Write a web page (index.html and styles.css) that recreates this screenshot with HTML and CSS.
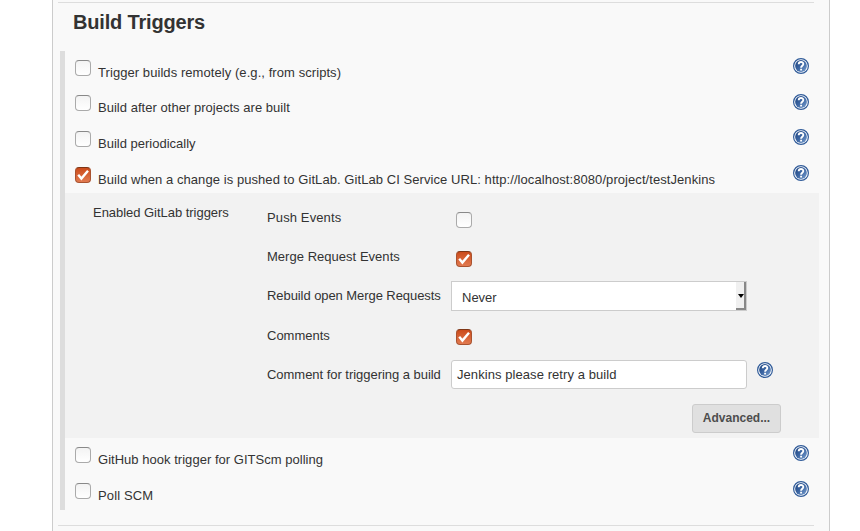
FILE: index.html
```html
<!DOCTYPE html>
<html lang="en">
<head>
<meta charset="utf-8">
<title>Build Triggers</title>
<link rel="stylesheet" href="styles.css">
</head>
<body>
<svg class="defs" width="0" height="0" aria-hidden="true">
  <defs>
    <linearGradient id="blue" x1="0" y1="0" x2="1" y2="1">
      <stop offset="0" stop-color="#1d437f"/><stop offset=".5" stop-color="#3c66a3"/><stop offset="1" stop-color="#7ba0cf"/>
    </linearGradient>
    <symbol id="help" viewBox="0 0 16 16">
      <circle cx="8" cy="8" r="7.4" fill="#fff" stroke="#305b99" stroke-width="1.2"/>
      <circle cx="8" cy="8" r="5.9" fill="url(#blue)"/>
      <path d="M5.7 6.2C5.8 3.3 10.3 3.3 10.3 6C10.3 7.8 8.1 7.7 8.1 9.8M8.1 10.8V12.6" fill="none" stroke="#fff" stroke-width="1.9"/>
    </symbol>
    <symbol id="tick" viewBox="0 0 16 16">
      <path d="M3.2 7.8L6.4 11.6L13 3.8" fill="none" stroke="#fff" stroke-width="2.4"/>
    </symbol>
  </defs>
</svg>
<main class="panel">
  <h1 class="title"><span>Build Triggers</span></h1>
  <section class="triggers">
    <div class="row short"><span class="box"></span><label class="wide">Trigger builds remotely (e.g., from scripts)</label><svg class="help"><use href="#help"/></svg></div>
    <div class="row low"><span class="box"></span><label class="loose">Build after other projects are built</label><svg class="help"><use href="#help"/></svg></div>
    <div class="row"><span class="box"></span><label>Build periodically</label><svg class="help"><use href="#help"/></svg></div>
    <div class="row short"><span class="box on"><svg><use href="#tick"/></svg></span><label class="wide">Build when a change is pushed to GitLab. GitLab CI Service URL: http://localhost:8080/project/testJenkins</label><svg class="help"><use href="#help"/></svg></div>
    <div class="details">
      <div class="group"><span class="tight">Enabled GitLab triggers</span></div>
      <div class="fields">
        <div class="name"><span class="widest">Push Events</span></div><div class="value"><span class="box"></span></div>
        <div class="name"><span class="loose">Merge Request Events</span></div><div class="value"><span class="box on"><svg><use href="#tick"/></svg></span></div>
        <div class="name"><span class="tighter">Rebuild open Merge Requests</span></div><div class="value"><div class="select"><span>Never</span><span class="arrow"></span></div></div>
        <div class="name down"><span>Comments</span></div><div class="value"><span class="box on"><svg><use href="#tick"/></svg></span></div>
        <div class="name"><span class="tight">Comment for triggering a build</span></div><div class="value"><div class="input"><span class="wide">Jenkins please retry a build</span></div><svg class="help"><use href="#help"/></svg></div>
      </div>
      <div class="button">Advanced...</div>
    </div>
    <div class="row"><span class="box"></span><label class="loose">GitHub hook trigger for GITScm polling</label><svg class="help"><use href="#help"/></svg></div>
    <div class="row"><span class="box"></span><label class="widest">Poll SCM</label><svg class="help"><use href="#help"/></svg></div>
  </section>
</main>
</body>
</html>
```
FILE: styles.css
```css
* { box-sizing: border-box; }
body { margin: 0; background: #fff; color: #333; font: 13px/16px "Liberation Sans", Arial, sans-serif; overflow: hidden; }
.defs { display: block; }
.panel { width: 778px; height: 531px; margin-left: 52px; padding: 2px 15px 0 5px; background: #f9f9f9; border: solid #ccc; border-width: 0 1px; }
.title { height: 49px; margin: 0; padding: 7px 0 0 15px; border-top: 1px solid #ddd; font-size: 20px; line-height: 24px; letter-spacing: -.18px; }
.triggers { width: 759px; margin-left: 2px; border-left: 5px solid #ddd; white-space: nowrap; }
.panel::after { content: ""; display: block; margin-top: 15px; border-top: 1px solid #ddd; }
.wide { letter-spacing: .068px; }
.widest { letter-spacing: .12px; }
.loose { letter-spacing: .028px; }
.tight { letter-spacing: -.035px; }
.tighter { letter-spacing: -.07px; }
.row { display: flex; height: 36px; padding: 0 10px; }
.row.short { height: 35px; }
.row .box { margin-top: 9px; }
.row label { margin: 14px 0 0 7px; }
.row .help { margin: 7px 0 0 auto; }
.row.low .help { margin-top: 8px; }
.help { flex: none; width: 16px; height: 16px; display: block; }
.box { flex: none; display: block; width: 16px; height: 16px; border: 1px solid #aaa; border-top-color: #888; border-radius: 4px; background: linear-gradient(#f3f3f3, #fff); }
.box.on { border-color: #a9522f; border-top-color: #7e3515; background: linear-gradient(#cb4b1b, #e27a50); }
.box svg { display: block; width: 16px; height: 16px; margin: -1px; }
.details { display: grid; grid-template-columns: 174px 1fr; grid-template-rows: 211px 34px; height: 245px; padding-left: 28px; background: #f2f2f2; }
.group { padding-top: 12px; }
.fields { display: grid; grid-template-columns: 184px 1fr; grid-template-rows: 39px 39px 39px 40px 39px; padding-top: 8px; }
.name { padding-top: 9px; }
.name.down { padding-top: 10px; }
.value { display: flex; }
.value > .box { margin: 11px 0 0 5px; }
.select { display: flex; justify-content: space-between; width: 296px; height: 30px; margin-top: 2px; border: 1px solid #ccc; background: #fff; }
.select > span:first-child { padding: 8px 0 0 10px; }
.arrow { width: 10px; height: 28px; background: #f0f0f0; border: solid #888; border-width: 0 2px 2px 0; padding: 12px 0 0 2px; }
.arrow::before { content: ""; display: block; width: 0; border: solid transparent; border-width: 4px 3px 0; border-top-color: #000; }
.input { width: 296px; height: 29px; margin-top: 2px; padding: 6px 5px; border: 1px solid #ccc; border-radius: 3px; background: #fff; }
.value > .help { margin: 4px 0 0 10px; }
.button { grid-column: 2; justify-self: end; width: 89px; height: 29px; margin-right: 38px; padding-top: 5px; border: 1px solid #ccc; border-radius: 3px; background: #e0e0e0; color: #4d4d4d; font-size: 12px; font-weight: bold; text-align: center; }
```
